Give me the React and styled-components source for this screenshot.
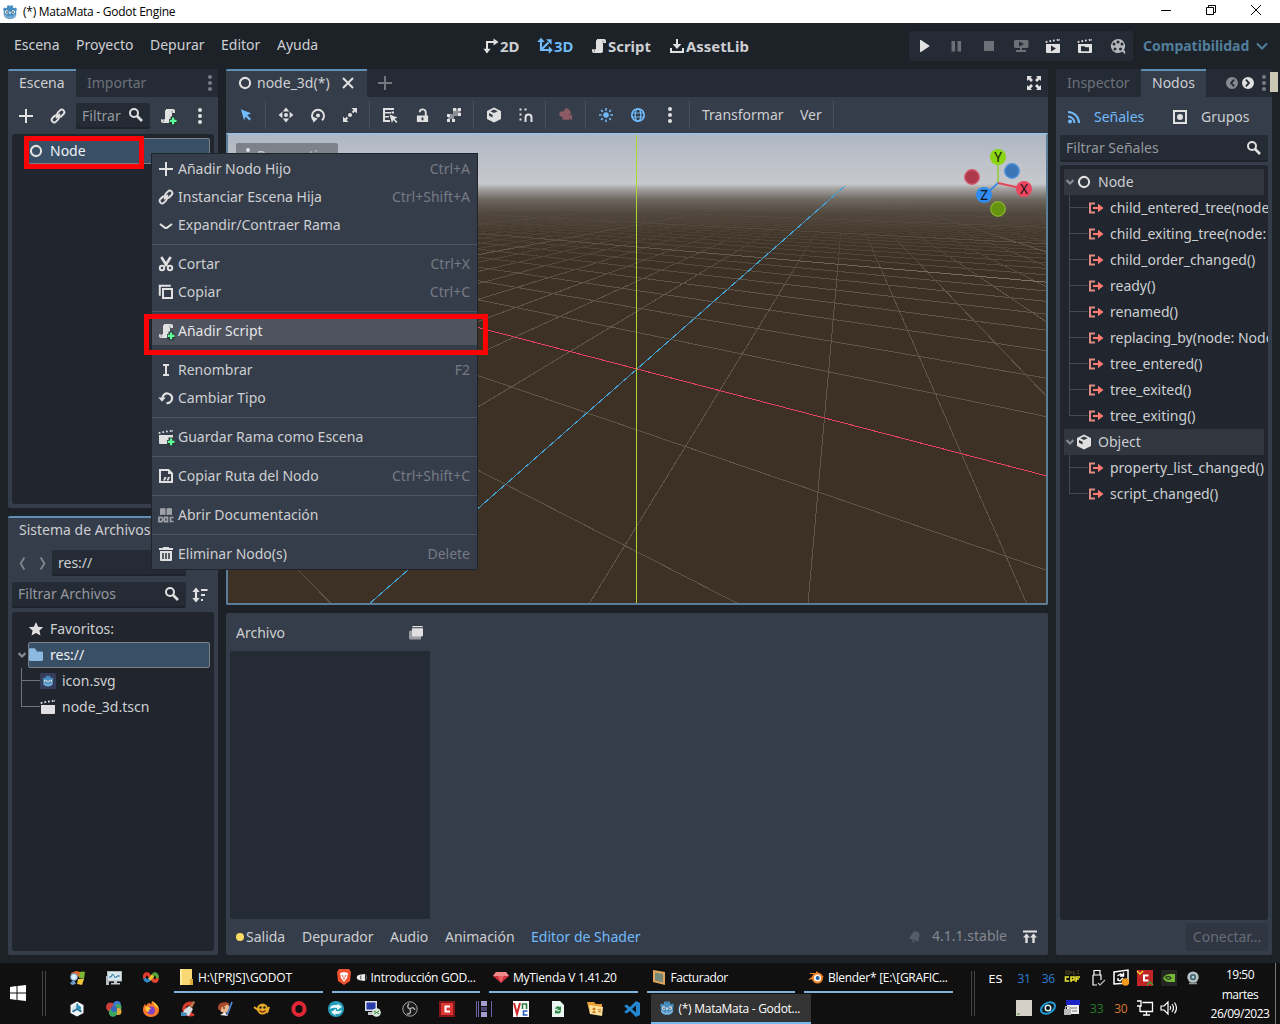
import React from 'react';
import styled, { createGlobalStyle, css } from 'styled-components';

const c = {
  base: '#1d2229', dark: '#252b34', panel: '#363d4a', tree: '#21262e', text: '#cdcfd2',
  dim: '#6c717b', mute: '#95989f', blue: '#70bafa', accent: '#5f8fb4', icon: '#e0e0e0',
};

const Global = createGlobalStyle`
  * { box-sizing: border-box; }
  html, body { margin: 0; background: ${c.base}; }
  body { width: 1280px; height: 1024px; overflow: hidden; font: 14px "Noto Sans", sans-serif; color: ${c.text}; }
  svg { display: block; flex: none; }
`;

/* raises the label by a pixel while the icons stay centred */
const lift = css`padding-bottom: 2px; & > svg { margin-top: 2px; }`;

/* ---------- icons ---------- */
const G = '#5fff97';
const scriptShape = (
  <>
    <path d="M6 1v1a1 1 0 0 0-1 1v8H1v2a2 2 0 0 0 2 2h7a2 2 0 0 0 2-2V5h3V3a2 2 0 0 0-2-2z" />
    <path d="M12 2.5V5M1.5 11.5h3M3.4 14V12" stroke="#8d9096" strokeWidth="1" fill="none" />
  </>
);
const slate = <path d="M.6 3.2l1.6-.4.5 1.8-1.9.4zM4.2 2.4l1.700-.4.4 1.8-1.7.4zM7.8 1.8l1.7-.3.4 1.8-1.7.3zM11.6 1.2l1.8-.3.4 1.8-1.8.3z M14.4.8H15v2h-.6z" />;
const plusBadge = <path d="M10.500 8.500h5V11H17v5h-1.500v1.500h-5V16H9v-5h1.500z" fill="#2b3a3a" />;
const plusMark = <path d="M12 9.500h2.200v2.300h2.300V14h-2.300v2.300H12V14H9.700v-2.200H12z" fill={G} />;
const line = { fill: 'none', stroke: 'currentColor', strokeWidth: 2 };

const icons = {
  add: <path d="M7 1v6H1v2h6v6h2V9h6V7H9V1z" />,
  link: <g {...line} strokeWidth="1.9"><rect x="-3.9" y="-2.5" width="7.8" height="5" rx="2.5" transform="translate(5.2 10.8) rotate(-45)" /><rect x="-3.9" y="-2.5" width="7.8" height="5" rx="2.5" transform="translate(10.8 5.2) rotate(-45)" /><path d="M6 10l4-4" /></g>,
  search: <g {...line}><circle cx="6" cy="6" r="4" /><path d="M9 9l5 5" strokeWidth="2.6" /></g>,
  script: scriptShape,
  scriptAdd: <>{scriptShape}{plusBadge}{plusMark}</>,
  dots: <><circle cx="8" cy="2" r="2" /><circle cx="8" cy="8" r="2" /><circle cx="8" cy="14" r="2" /></>,
  node: <circle cx="8" cy="8" r="5.1" {...line} strokeWidth="2.1" />,
  close: <path d="M3 3l10 10M13 3L3 13" {...line} />,
  twoD: <g><path d="M4 12V4h7" {...line} /><path d="M10.500 .4l5 3.600-5 3.600zM.4 10.800h7.200L4 15.600z" /></g>,
  threeD: <g><path d="M4 3v9h9M4 12l7.500-7.500" {...line} strokeWidth="2.2" /><path d="M4-.2L7.800 4H.2zM15.800 12l-4 3.800V8.200zM14.600 1.200v5.600L9 1.200z" /></g>,
  download: <g><path d="M2 10v4h12v-4" {...line} /><path d="M7 1h2v5h3.400L8 11 3.600 6H7z" /></g>,
  play: <path d="M4 2.500v11a.6.6 0 0 0 1 .4l8.200-5.400a.6.6 0 0 0 0-1L5 2.100a.6.6 0 0 0-1 .4z" />,
  pause: <path d="M3.500 3h3.600v10.500H3.500zM9.500 3h3.600v10.500H9.500z" />,
  stop: <path d="M3 3h10v10H3z" />,
  remote: <><path fillRule="evenodd" d="M3 2h11a1.500 1.500 0 0 1 1.500 1.500v5A1.500 1.500 0 0 1 14 10H2.500A1.500 1.500 0 0 1 1 8.500v-5A1.500 1.500 0 0 1 2.500 2zM6 3.400v5.200L11.200 6z" /><path d="M7 10h2v2h4v2H3v-2h4z" /></>,
  playScene: <>{slate}<path fillRule="evenodd" d="M1 6h14v8a1 1 0 0 1-1 1H2a1 1 0 0 1-1-1zM6 7.500v6l5-3z" /></>,
  playCustom: <>{slate}<path fillRule="evenodd" d="M1 6h14v8a1 1 0 0 1-1 1H2a1 1 0 0 1-1-1zM4 8.300v5h8V9.200H8.500L7.500 8.300z" /></>,
  scene: <>{slate}<path d="M1 6h14v8a1 1 0 0 1-1 1H2a1 1 0 0 1-1-1z" /></>,
  sceneAdd: <>{slate}<path d="M1 6h14v8a1 1 0 0 1-1 1H2a1 1 0 0 1-1-1z" />{plusBadge}{plusMark}</>,
  movie: <><path fillRule="evenodd" d="M8 1a7 7 0 1 0 3.500 13H15v-1.500h-1.600A7 7 0 0 0 8 1zm0 1.400a1.500 1.500 0 1 1 0 3 1.500 1.500 0 0 1 0-3zM4 4.500a1.500 1.500 0 1 1 0 3 1.500 1.500 0 0 1 0-3zm8 0a1.500 1.500 0 1 1 0 3 1.500 1.500 0 0 1 0-3zm-7 5a1.500 1.500 0 1 1 0 3 1.500 1.500 0 0 1 0-3zm5.500 0a1.500 1.500 0 1 1 0 3 1.500 1.500 0 0 1 0-3z" /><path d="M12.500 12l2.500 3.500" stroke="currentColor" strokeWidth="1.400" /></>,
  chevDown: <path d="M3 5.500L8 10.500l5-5" {...line} />,
  expandBranch: <path d="M2 7l4.800 3.600a2 2 0 0 0 2.400 0L14 7" {...line} />,
  chevLeft: <path d="M10 1.500L6 8l4 6.500" {...line} />,
  chevRight: <path d="M6 1.500L10 8l-4 6.500" {...line} />,
  fold: <path d="M3.400 5.500L8 10l4.600-4.500" {...line} strokeWidth="2.900" />,
  select: <path d="M2.200 1.500l11.500 4.400-4.300 2.300 4.400 4.200-1.900 1.900-4.300-4.300-1.900 4z" />,
  move: <><circle cx="8" cy="8" r="2" /><path d="M8 .6l3.200 3.800H4.800zM8 15.400l3.200-3.800H4.800zM.6 8l3.800 3.200V4.800zM15.400 8l-3.800 3.200V4.800z" /></>,
  rotate: <><circle cx="8" cy="8.500" r="2" /><path d="M4 13.300A6 6 0 1 1 12 13.300" {...line} /><path d="M1 9.300h6L4.500 14.800z" transform="rotate(20 4 12) translate(.3 1)" /></>,
  scale: <><circle cx="8" cy="8" r="2" /><path d="M9.500 1H15v5.500l-2-2-1.700 1.700-1.500-1.500L11.500 3zM6.500 15H1V9.500l2 2 1.700-1.700 1.500 1.500L4.500 13z" /></>,
  list: <><path d="M1 1h11v2H3v2h6v1.600H3V9h4v1.600H3V13h5v2H1z M9.500 4.500H12v2H9.500z" /><path d="M7.500 7.500l8 3-3 1.500 3 2.800-1.200 1.200-3-2.900-1.400 2.800z" /></>,
  unlock: <><path d="M5 4.500A3.200 3.200 0 0 1 11.500 5v4" {...line} /><path fillRule="evenodd" d="M2 8h12v7H2zM7 10v3h2v-3z" /></>,
  group: <><path d="M7 1h3v3H7zM12 1h3v3h-3zM12 6h3v3h-3zM1 7h3v3H1zM1 12h3v3H1zM6 12h3v3H6z" /><path d="M10 1.500h2V4h2.500v2H12v3H7V4h3zM2 10h2V7h4v5H4v2H2z" opacity=".5" /></>,
  cube: <path fillRule="evenodd" d="M8 .6l7 3.300v8.200l-7 3.400-7-3.400V3.900zM8 2.600L4.300 4.300 8 6.100l3.700-1.800zM3 6v2.700l3.600 1.700V7.800z" />,
  snap: <><path d="M1.500 1.500h2v2h-2zM6.500 1.500h2v2h-2zM1.500 6.500h2v2h-2zM1.500 11.500h2v2h-2z" /><path d="M7.500 15V10.500a3 3 0 0 1 6 0V15" {...line} /></>,
  camera: <path d="M6 2.500a3 3 0 0 1 5.700-.3A3.300 3.300 0 0 1 12 8v1l3-2v7l-3-2v1.500H4V10a3.200 3.200 0 1 1 1-6z" />,
  sun: <><circle cx="8" cy="8" r="3.200" /><path d="M8 0v3M8 13v3M0 8h3M13 8h3M2.400 2.400l1.900 1.900M11.700 11.700l1.900 1.900M13.600 2.400l-1.900 1.900M4.300 11.700l-1.900 1.900" {...line} strokeWidth="1.800" /></>,
  globe: <g {...line} strokeWidth="1.700"><circle cx="8" cy="8" r="6.200" /><ellipse cx="8" cy="8" rx="2.800" ry="6" strokeWidth="1.300" /><path d="M2 6h12M2 10h12" strokeWidth="1.200" /></g>,
  expand: <path d="M1 1h5L4.600 2.400 7 5 5 7 2.500 4.600 1 6zM15 1v5l-1.500-1.400L11 7 9 5l2.500-2.600L10 1zM1 15v-5l1.500 1.400L5 9l2 2-2.400 2.600L6 15zM15 15h-5l1.500-1.400L9 11l2-2 2.500 2.400L15 10z" />,
  prev: <path fillRule="evenodd" d="M8 2a6 6 0 1 0 0 12A6 6 0 0 0 8 2zm1.500 2l1.300 1.200L8.300 8l2.500 2.800L9.500 12 5.800 8z" />,
  next: <path fillRule="evenodd" d="M8 2a6 6 0 1 0 0 12A6 6 0 0 0 8 2zM6.500 4L5.200 5.200 7.700 8l-2.500 2.800L6.500 12l3.700-4z" />,
  signals: <><circle cx="4" cy="12.500" r="2" /><path d="M2 7.500a6.500 6.500 0 0 1 6.500 6.500M2 3a11 11 0 0 1 11 11" {...line} /></>,
  groups: <><path d="M2 2h12v12H2z" {...line} /><circle cx="8" cy="8" r="3" /></>,
  signal: <><path d="M7 3.500H2v9h5" {...line} /><path d="M5 7h5V3.700L15.500 8 10 12.300V9H5z" fill="#ff7a70" /></>,
  cut: <><path d="M3.300 1L9 10M12.700 1L7 10" {...line} strokeWidth="2.600" /><circle cx="4" cy="12" r="2.200" {...line} /><circle cx="12" cy="12" r="2.200" {...line} /></>,
  copy: <><path d="M1 11V1h11" {...line} transform="translate(.8 .8)" /><path d="M5 5h9v9H5z" {...line} /></>,
  rename: <path d="M5 2h6v2H9v8h2v2H5v-2h2V4H5z" />,
  reload: <><path d="M4.500 8a4.800 4.800 0 1 1 4 5" {...line} strokeWidth="2.200" /><path d="M.3 7.500h7.400L4 11.800z" /></>,
  path: <><path d="M2 2h8.500L14 5.500V14H2z" {...line} /><path d="M10 1l5 5h-5z" /><path d="M6.500 9h2L7 12.500H5zM10 9h2l-1.500 3.500h-2z" /></>,
  doc: <><path d="M2 1.500q3-1 5.500 0V8Q5 7.300 2 8zM8.500 1.500q3-1 5.500 0V8q-3-.7-5.500 0z" /><path d="M1 10.300h1.500a2 2 0 0 1 0 4.400H1zM6.500 10.300h3v4.400h-3zM15.500 10.500h-3v4h3" fill="none" stroke="currentColor" strokeWidth="1.700" /></>,
  trash: <path fillRule="evenodd" d="M5 1h6v1h4v2H1V2h4zM2 5h12v9a1 1 0 0 1-1 1H3a1 1 0 0 1-1-1zM4.200 7v6h1.600V7zM7.200 7v6h1.600V7zM10.200 7v6h1.600V7z" />,
  sort: <><path d="M4 3.500v9" {...line} strokeWidth="2.200" /><path d="M4 .5L7.700 5H.3zM4 15.500L7.700 11H.3zM9 2h6.500v2H9zM9 7h4v2H9zM9 12h2v2H9z" /></>,
  star: <path d="M8 1l2.100 4.700 5.100.5-3.800 3.400 1.100 5L8 12l-4.500 2.600 1.100-5L.8 6.200l5.100-.5z" />,
  folder: <path d="M1 2.500a1.200 1.200 0 0 1 1.200-1.200h4.600L8.500 3.500v1h5.300A1.200 1.200 0 0 1 15 5.700v7a1.200 1.200 0 0 1-1.200 1.200H2.200A1.200 1.200 0 0 1 1 12.700z" />,
  float: <><path d="M4 5.500h9v9H2.500A1.500 1.500 0 0 1 1 13V7a1.500 1.500 0 0 1 1.500-1.500z" opacity=".6" /><path d="M5.200 1h8.600A1.200 1.200 0 0 1 15 2.200H4A1.200 1.200 0 0 1 5.200 1zM4 3.200h11v7a1.200 1.200 0 0 1-1.200 1.200H5.200A1.200 1.200 0 0 1 4 10.200z" /></>,
  bell: <path transform="rotate(20 8 8)" d="M8 1.500a4.500 4.500 0 0 1 4.500 4.500c0 2.500.5 4 2 5.500h-13c1.500-1.500 2-3 2-5.500A4.500 4.500 0 0 1 8 1.500zM6 12.500h4a2 2 0 0 1-4 0z" />,
  toTop: <path d="M1 1.500h14v2H1zM4.500 4.500L8 8.500H5.700V14H3.300V8.500H1zM11.500 4.500L15 8.500h-2.300V14h-2.400V8.500H8z" />,
};

const Glyph = ({ n, s = 16, color = c.icon }) => (
  <svg width={s} height={s} viewBox="0 0 16 16" fill="currentColor" color={color} overflow="visible">{icons[n]}</svg>
);

const Godot = ({ s = 16, tile }) => (
  <svg width={s} height={s} viewBox="0 0 16 16">
    {tile && <rect width="16" height="16" rx="1.500" fill="#363d5a" />}
    <g transform={tile ? 'translate(1.800 1.800) scale(.78)' : undefined}>
      <path d="M1 5l1.500-1.500L4 4.300l1-.5L4.800 2 7 1l1 1.700L9 1l2.200 1L11 3.800l1 .5 1.500-.8L15 5l-.8 2v4.500Q12.500 15 8 15T1.800 11.500V7z" fill="#478cbf" />
      <path d="M2 10.500l3 .4.300 1.300 1.700.2.200-1.200h1.600l.2 1.200 1.700-.2.300-1.300 3-.4v1.200Q12 14.500 8 14.500T2 11.700z" fill="#9cc6e4" opacity=".6" />
      <circle cx="4.700" cy="8" r="1.700" fill="#fff" /><circle cx="11.300" cy="8" r="1.700" fill="#fff" />
      <circle cx="4.900" cy="8.100" r=".9" fill="#414042" /><circle cx="11.100" cy="8.100" r=".9" fill="#414042" />
      <path d="M7.400 7.500h1.200v2.400H7.400z" fill="#fff" />
    </g>
  </svg>
);

/* ---------- window chrome ---------- */
const Shell = styled.div`width: 1280px; height: 1024px; position: relative; display: flex; flex-direction: column; overflow: hidden; background: ${c.base};`;
const TitleBar = styled.header`height: 23px; background: #fff; color: #000; display: flex; align-items: center; padding-left: 2px; font: 12px "Open Sans", sans-serif;`;
const Title = styled.span`flex: 1; margin-left: 5px; letter-spacing: -.26px; line-height: 24px; height: 23px;`;
const WinButtons = styled.div`display: flex; gap: 29px; padding-right: 16px; margin-top: -3px;`;
const MenuBar = styled.nav`height: 46px; display: flex; align-items: center; padding-left: 14px;`;
const MenuItem = styled.span`width: ${p => p.$w}px; white-space: nowrap; margin-top: -4px; flex: none;`;
const ModeButton = styled.span`width: ${p => p.$w}px; flex: none; display: flex; align-items: center; gap: 1px; font-weight: 700; font-size: 14.900px; white-space: nowrap; color: ${p => (p.$on ? c.blue : c.text)};`;
const RunBar = styled.div`width: 224px; height: 30px; flex: none; background: ${c.dark}; border-radius: 3px; display: flex; align-items: center; padding-left: 7px; gap: 16.300px; margin-left: ${p => p.$ml}px;`;
const Renderer = styled.span`margin-left: 10px; display: flex; align-items: center; gap: 5px; color: #527e9b; font-weight: 700; ${lift}`;

const Work = styled.main`height: 886px; display: flex; gap: 8px; padding: 0 8px;`;
const Column = styled.div`width: ${p => p.$w}px; display: flex; flex-direction: column; gap: 8px; flex: none;`;
const Dock = styled.section`height: ${p => p.$h}px; background: ${c.panel}; border-radius: 2px; display: flex; flex-direction: column; overflow: hidden; flex: none;`;
const Tabs = styled.div`height: 28px; background: ${p => p.$bg || c.dark}; display: flex; align-items: center; padding-right: ${p => p.$pr || 0}px; flex: none;`;
const Tab = styled.div`width: ${p => p.$w}px; height: 28px; display: flex; align-items: center; padding: 0 0 4px ${p => p.$pl || 11}px; gap: 4px; white-space: nowrap;
  color: ${p => (p.$on ? c.text : c.dim)}; background: ${p => (p.$on ? c.panel : 'transparent')}; border-top: 2px solid ${p => (p.$on ? c.accent : 'transparent')}; & > svg { margin-top: 2px; }`;
const Push = styled.span`flex: 1;`;
const Tools = styled.div`height: ${p => p.$h}px; display: flex; align-items: center; flex: none; padding: ${p => p.$pt || 0}px 4px 0;`;
const Tool = styled.span`width: ${p => p.$w || 32}px; display: flex; align-items: center; justify-content: center; flex: none;`;
const Divider = styled.span`width: 8px; height: 28px; background: linear-gradient(#4a505c, #4a505c) 3px 0 / 1px 100% no-repeat; flex: none;`;
const TextTool = styled.span`width: ${p => p.$w}px; padding: 0 0 2px 8px; flex: none;`;
const Field = styled.div`width: ${p => p.$w}px; height: ${p => p.$h || 26}px; background: ${c.dark}; border-bottom: 2px solid #1e232b; border-radius: 2px; display: flex; align-items: center; justify-content: space-between;
  padding: 0 6px; color: ${p => (p.$lit ? c.text : c.mute)}; flex: none; white-space: nowrap;`;
const Tree = styled.div`margin: ${p => p.$m || '0 4px 4px'}; padding: 4px; background: ${c.tree}; border-radius: 3px; flex: 1; min-height: 0; overflow: hidden;`;
const Selected = styled.div`height: 26px; width: 182px; margin-left: ${p => p.$ml}px; flex: none; display: flex; align-items: center; gap: 6px; background: #384f66; border: 1px solid #7b8088; border-radius: 2px; color: #eef1f4; ${lift} & > svg { margin-left: -1px; }`;
const Branch = styled.div`height: 26px; width: 19px; flex: none; margin: 2px -6px 0 5px; display: grid; grid-template-rows: 13px 13px;
  &::before { content: ''; border-left: 1px solid ${p => p.$c}; border-bottom: 1px solid ${p => p.$c}; }
  &::after { content: ''; border-left: ${p => (p.$last ? 0 : 1)}px solid ${p => p.$c}; }`;
const Row = styled.div`height: 26px; display: flex; align-items: center; gap: ${p => p.$gap ?? 6}px; padding-left: ${p => p.$pl || 0}px; white-space: nowrap; ${lift}
  & > ${Selected} { margin-top: 2px; }
  ${p => p.$head && 'background: #31363f; width: 200px;'}`;

/* ---------- 3D view ---------- */
const View = styled.div`height: 472px; position: relative; overflow: hidden; border: 2px solid #5b7d97; border-top-color: #9cbfe0; border-radius: 1px;`;
const Chip = styled.div`position: absolute; left: 8px; top: 8px; width: 102px; height: 26px; background: rgba(70,74,80,.5); border-radius: 2px; color: #c7cacf; display: flex; align-items: center; gap: 1px; padding-left: 4px; ${lift}`;

const project = (x, z) => {
  const w = 1 - 0.104 * x - 0.1935 * z;
  return [(637 + 8 * x - 163.500 * z) / w, (369 - 19.300 * x - 36 * z) / w];
};
const segment = (a, b) => `M${a.map(v => v.toFixed(1)).join(' ')}L${b.map(v => v.toFixed(1)).join(' ')}`;
const alongZ = x => segment(project(x, -60), project(x, (0.92 - 0.104 * x) / 0.1935));
const alongX = z => segment(project(-120, z), project((0.92 - 0.1935 * z) / 0.104, z));
const steps = (a, b) => Array.from({ length: b - a + 1 }, (_, i) => a + i);
const minor = [...steps(-44, 34).filter(n => n % 8).map(alongZ), ...steps(-44, 4).filter(n => n % 8).map(alongX)].join('');
const major = [...[-40, -32, -24, -16, -8, 8, 16, 24, 32].map(alongZ), ...[-40, -32, -24, -16, -8].map(alongX)].join('');

const Scene = () => (
  <svg width="818" height="468" viewBox="228 135 818 468">
    <defs>
      <linearGradient id="sky" gradientUnits="userSpaceOnUse" x1="0" y1="133" x2="0" y2="605">
        <stop offset="0" stopColor="#aeb6c2" /><stop offset=".055" stopColor="#bcc1c9" /><stop offset=".108" stopColor="#c6c8cb" />
        <stop offset=".118" stopColor="#a5a3a1" /><stop offset=".14" stopColor="#706962" /><stop offset=".17" stopColor="#50473c" />
        <stop offset=".21" stopColor="#42372b" /><stop offset=".27" stopColor="#3d3126" /><stop offset="1" stopColor="#3d3126" />
      </linearGradient>
      <linearGradient id="fade" gradientUnits="userSpaceOnUse" x1="0" y1="204" x2="0" y2="285">
        <stop offset="0" stopColor="#fff" stopOpacity="0" /><stop offset=".4" stopColor="#fff" stopOpacity=".35" /><stop offset="1" stopColor="#fff" />
      </linearGradient>
      <mask id="far" maskUnits="userSpaceOnUse" x="226" y="133" width="822" height="472"><rect x="226" y="133" width="822" height="472" fill="url(#fade)" /></mask>
    </defs>
    <rect x="226" y="133" width="822" height="472" fill="url(#sky)" />
    <g fill="none" shapeRendering="crispEdges">
      <g mask="url(#far)"><path d={minor} stroke="#5e554b" /><path d={major} stroke="#7f786f" /></g>
      <path d="M478 327.500L637 369 1048 476.300" stroke="#e8435f" />
      <path d="M845.500 185.500L637 369 368 605" stroke="#459fd0" />
      <path d="M636.500 133v472" stroke="#a9d92e" />
    </g>
    <g strokeWidth="1.800">
      <path d="M998 183V160" stroke="#9ccb58" strokeWidth="2" /><path d="M998 183l22 5" stroke="#e5465c" /><path d="M998 183l-12 11" stroke="#3a8de0" />
      <circle cx="972" cy="177" r="7.200" fill="#ad374b" stroke="#d3566c" strokeWidth="1.500" />
      <circle cx="1012" cy="171" r="7.200" fill="#3b75b5" stroke="#4d90d8" strokeWidth="1.500" />
      <circle cx="998" cy="209" r="7.200" fill="#66930f" stroke="#82ae28" strokeWidth="1.500" />
    </g>
    <circle cx="998" cy="157" r="8" fill="#8bd514" /><circle cx="1024" cy="189" r="8" fill="#ec4560" /><circle cx="984" cy="195" r="8" fill="#2f8cf0" />
    <g fontFamily="Noto Sans" fontSize="13.500" textAnchor="middle" fill="#111"><text x="998" y="162">Y</text><text x="1024" y="194">X</text><text x="984" y="200">Z</text></g>
  </svg>
);

/* ---------- bottom panel ---------- */
const FileHead = styled.div`height: 38px; width: 200px; margin-left: 4px; padding: 2px 6px 0; display: flex; align-items: center; justify-content: space-between; ${lift}`;
const FileList = styled.div`height: 268px; width: 200px; margin-left: 4px; background: ${c.dark}; border-radius: 2px;`;
const BottomBar = styled.div`height: 36px; display: flex; align-items: center; padding: 0 10px; ${lift}`;
const BottomTab = styled.span`width: ${p => p.$w}px; white-space: nowrap; color: ${p => (p.$on ? c.blue : c.text)};`;
const Dot = styled.i`width: 8px; height: 8px; border-radius: 50%; background: #ffdd65; margin: 2px 2px 0 0;`;
const Version = styled.span`color: #83878f; margin: -2px 15px 0 10px;`;

const SignalTabs = styled.div`height: 38px; display: flex; align-items: center; padding-left: 10px; padding-top: 2px; flex: none;`;
const SignalTab = styled.span`width: ${p => p.$w}px; display: flex; align-items: center; gap: ${p => p.$gap}px; color: ${p => (p.$on ? c.blue : c.text)}; ${lift}`;
const Connect = styled.div`width: 82px; height: 28px; margin: 0 4px 4px auto; background: #2f3541; border-radius: 2px; color: #676c76; display: flex; align-items: center; justify-content: center; ${lift}`;

/* ---------- context menu ---------- */
const Menu = styled.div`position: absolute; left: 151px; top: 153px; width: 327px; height: 417px; padding: 1px 0; background: ${c.panel}; border: 1px solid #1f242c; z-index: 2;`;
const Entry = styled.div`height: 28px; padding: 0 7px 0 6px; display: flex; align-items: center; gap: 4px; background: ${p => (p.$hot ? '#4e535e' : 'transparent')}; color: ${p => (p.$hot ? '#e3e5e8' : c.text)}; ${lift}`;
const Keys = styled.span`margin-left: auto; color: #757a84;`;
const Rule = styled.div`height: 11px; background: linear-gradient(#4d5460, #4d5460) 0 5px / 100% 1px no-repeat;`;
const Highlight = styled.div`position: absolute; z-index: 3; border: 5px solid #fb0204; left: ${p => p.$x}px; top: ${p => p.$y}px; width: ${p => p.$w}px; height: ${p => p.$h}px;`;
const Sliver = styled.div`position: absolute; left: 1270px; top: 72px; width: 8px; height: 20px; background: #cbc7b2;`;

const entries = [
  ['add', 'Añadir Nodo Hijo', 'Ctrl+A'], ['link', 'Instanciar Escena Hija', 'Ctrl+Shift+A'], ['expandBranch', 'Expandir/Contraer Rama'], null,
  ['cut', 'Cortar', 'Ctrl+X'], ['copy', 'Copiar', 'Ctrl+C'], null, ['scriptAdd', 'Añadir Script', '', true], null,
  ['rename', 'Renombrar', 'F2'], ['reload', 'Cambiar Tipo'], null, ['sceneAdd', 'Guardar Rama como Escena'], null,
  ['path', 'Copiar Ruta del Nodo', 'Ctrl+Shift+C'], null, ['doc', 'Abrir Documentación'], null, ['trash', 'Eliminar Nodo(s)', 'Delete'],
];

/* ---------- taskbar ---------- */
const Taskbar = styled.footer`height: 61px; margin-top: 8px; background: #101010; display: flex; color: #fff; font: 12px "Open Sans", sans-serif; padding-left: 10px; flex: none; & > * { flex: none; }`;
const Grip = styled.span`width: 4px; height: 45px; margin-top: 8px; border: solid #444; border-width: 0 1px;`;
const Start = styled.span`width: 32px; padding-top: 22px;`;
const TaskRows = styled.div`width: 912px; margin-left: 12.500px;`;
const TaskRow = styled.div`height: ${p => p.$h}px; display: flex; & > * { flex: none; }`;
const Slot = styled.span`width: 37px; height: 30px; display: grid; place-items: center;`;
const Task = styled.span`width: 148.500px; height: 30px; margin-right: 9px; padding-left: 4px; border-bottom: 2px solid #7fb2dd; display: flex; align-items: center; gap: 4px; white-space: nowrap; letter-spacing: ${p => p.$ls ?? -.27}px;`;
const ActiveTask = styled(Task)`width: 160px; padding-left: 8px; margin: 0; background: #333; border-bottom-color: #76b9ed;`;
const First = styled.span`width: 4.500px;`;
const Lang = styled.span`width: 37.500px; padding: 10px 0 0 14px; font-family: "DejaVu Sans", sans-serif; font-size: 11px;`;
const Tray = styled.div`width: 194px; display: grid; grid-template-columns: repeat(8, 24.200px); grid-template-rows: 30px 30px; place-items: center;`;
const Temp = styled.span`color: ${p => p.$c}; letter-spacing: -.3px;`;
const Clock = styled.div`width: 68px; text-align: center; line-height: 19.500px; padding-top: 2px; white-space: nowrap; letter-spacing: -.48px;`;
const ShowDesk = styled.span`height: 61px; width: 4px; border-left: 1px solid #777; margin-left: 1px;`;

const apps = {
  win7: <><path d="M7 1l4 1v5L7 6zM2 3l5-2v5L3 8z" fill="#e66a28" /><path d="M11 2q3-1 5 0l-1 7-5-1z" fill="#7eb636" /><path d="M9 9h6l-2 6-5-1z" fill="#f0c63c" /><path d="M1 13l4-3 2 4-4 1z" fill="#6f9fc9" /><circle cx="5" cy="7" r="3.500" fill="#dbeefa" stroke="#5b89b5" /></>,
  monitor: <><path d="M0 6h3v9H0z" fill="#b9bfc4" /><rect x="1.500" y="1.500" width="14" height="9.500" fill="#d8e6ec" stroke="#aeb5b9" /><path d="M3 7h2l1.500-3 3 4 1.500-2h3" stroke="#18739b" fill="none" /><path d="M8 11h3v2h3v1.500H5V13h3z" fill="#c9cccd" /></>,
  loop: <g fill="none" strokeWidth="3.200"><path d="M8 8L5.500 10.500Q3 12 1.500 8" stroke="#3087c7" /><path d="M1.500 8Q1 3 5 4l3 4" stroke="#e23b2e" /><path d="M8 8l3 3q3 1 3.500-3" stroke="#e9452f" /><path d="M8 8l3-4q3-1 3.500 4" stroke="#58a63b" /><path d="M6.500 9.500L10 5.500" stroke="#f3c12c" /></g>,
  folder: <><path d="M2 0h12v16H2z" fill="#f7d872" /><path d="M12 10h3v6h-3z" fill="#dcae3c" /><path d="M2 0h2v16H2z" fill="#ffe9a0" /></>,
  brave: <><path d="M3 0h10l2 3-1 9-6 4-6-4L1 3z" fill="#f0532d" /><path d="M4 4l4-1 4 1-1 5-3 4-3-4z" fill="#fff" /><path d="M6 6L7 8M10 6L9 8M8 8v3" stroke="#f0532d" /></>,
  gem: <><path d="M3 3h10l3 4-8 7-8-7z" fill="#c9333c" /><path d="M3 3h10l3 4H0z" fill="#f0898a" /><path d="M5 7h6l-3 7z" fill="#ea5e64" /></>,
  pane: <><path d="M2 1l12 2v13L2 13z" fill="#e0a45c" /><path d="M4 3.500l8 1.500v8.500l-8-2z" fill="#758a7b" /></>,
  blender: <><path d="M0 11l7-6H2V4h6V2l8 6z" fill="#f08223" /><circle cx="9.500" cy="9" r="5.500" fill="#f08223" /><circle cx="9.500" cy="9" r="3.600" fill="#fff" /><circle cx="9.700" cy="9" r="2" fill="#245b9d" /></>,
  hex: <><path d="M8 .5L14.500 4v8L8 15.500 1.500 12V4z" fill="#f2f5f7" /><path d="M8 2.500V8l-5 2.500V7z" fill="#d1e3ec" /><path d="M7.500 2.500h1.500v5l4 2.500-1 1.500-4-2.500L4 11.500 3 10l4.500-2.500z" fill="#256f94" /><path d="M8 3l4 3v3L8 7.500z" fill="#2b93b9" /></>,
  balls: <><circle cx="4.500" cy="6" r="4.500" fill="#cb3f3d" /><circle cx="11" cy="4" r="3.900" fill="#3d78d3" /><circle cx="12" cy="6.500" r="3.500" fill="#4aa35a" /><circle cx="12" cy="10.500" r="3.500" fill="#e0a93b" /><circle cx="7" cy="11.500" r="4.200" fill="#39a85d" /><circle cx="8" cy="8" r="3" fill="#3566c4" /></>,
  firefox: <><path d="M9 0c3 2 7 4 7 9a8 7 0 0 1-16 0C0 6 1 4 2 3l1 2c1-2 2-3 4-3l1 2z" fill="#ff7a2a" /><circle cx="8" cy="9.500" r="4" fill="#8243c9" /><path d="M2 6q4-1 6 2-3 0-2 3-3 0-4-5zM9 0c3 2 6 4 6.500 8L12 5z" fill="#ffcf3c" /></>,
  cc: <><path d="M15 2A8 7.500 0 1 0 15 14l-4-3q-5 2-5-3t5-3z" fill="#d43c2e" /><path d="M9 6l4-6 2 1-3 6z" fill="#b9774a" /><path d="M4 9l5-4 4 3-4 7-6-2z" fill="#d7dfe2" /><path d="M1 11l6 1-1 3H1z" fill="#408dbb" /></>,
  painter: <><circle cx="7.500" cy="7" r="5" fill="#eab588" /><path d="M1 8q-1-7 8-7l4 2q-5 1-6 3-3-1-3 4z" fill="#a9492c" /><path d="M3 14l5-3 3 4z" fill="#e8e8e8" /><circle cx="7" cy="7" r=".8" /><path d="M15 1L10 14" stroke="#4d85ce" strokeWidth="1.800" /></>,
  smile: <><circle cx="8.500" cy="8" r="5.500" fill="#e7ac27" /><circle cx="6.500" cy="6.500" r="1.200" fill="#222" /><circle cx="10.500" cy="6.500" r="1.200" fill="#222" /><path d="M5.500 9.500q3 3 6 0" stroke="#7b2a16" strokeWidth="1.300" fill="none" /><path d="M0 6l4 3M13 12l2-6" stroke="#e7ac27" strokeWidth="2" /></>,
  opera: <ellipse cx="8" cy="8" rx="5.600" ry="6" fill="none" stroke="#e12635" strokeWidth="4" />,
  swirl: <><circle cx="8" cy="8" r="8" fill="#269db7" /><path d="M2 8q0-4 5-4h3l-1-2 5 4-5 3V7q-4-1-7 1zM14 9q-1 4-5 4H7l1 2-5-4 5-3v2q3 1 6-1z" fill="#e8f7fa" /></>,
  remote: <><path d="M0 0h12v10H0z" fill="#d8dde8" /><path d="M1.500 1.500h9v7h-9z" fill="#283ba8" /><path d="M3 11h6v3H3z" fill="#bfc4c9" /><circle cx="11.500" cy="11.500" r="4.300" fill="#dfe7dc" /><path d="M9 10l2.500 1.500L9 13M14 10l-2.500 1.500L14 13" stroke="#268342" fill="none" /></>,
  obs: <><circle cx="8" cy="8" r="7.200" fill="#1b1b1b" stroke="#a6a6a6" /><path d="M7 2.500q-3 4 1 5.500M13 9q-2-4-5-1M5 13q5 0 3-5" fill="none" stroke="#a6a6a6" strokeWidth="1.500" /></>,
  red: <><rect width="16" height="16" fill="#841719" /><rect x="2" y="2" width="12" height="12" fill="#dc3735" /><path d="M11 5.500H6.500v5H11" fill="none" stroke="#fff" strokeWidth="2" /></>,
  redTray: <><rect width="16" height="16" fill="#c02427" /><path d="M11.500 5.500H7v5h4.500" fill="none" stroke="#fff" strokeWidth="2" /><path d="M0 1l3 3 3-3" fill="none" stroke="#e8d638" strokeWidth="1.500" /><path d="M10 15l3-3 3 3" fill="none" stroke="#36a23b" strokeWidth="1.500" /></>,
  h: <><path d="M.5 0v16M15.500 0v16M2.500 0v16" stroke="#6d62a8" /><path d="M5 0h6v5H5zM5 11h6v5H5z" fill="#a39dd0" /><path d="M5 6h6v4H5z" fill="#4b4670" /></>,
  vnc: <><rect width="16" height="16" fill="#fff" /><path d="M1 2l3 11L7 2" stroke="#cd2626" strokeWidth="2" fill="none" /><path d="M9.500 8V3h4v5" stroke="#287d3b" strokeWidth="1.600" fill="none" /><path d="M14.500 10h-4v4h4" stroke="#2759bc" strokeWidth="1.600" fill="none" /></>,
  recycle: <><path d="M2 0h8l4 4v12H2z" fill="#eaf5ef" /><path d="M5 8q1-4 5-2l1-1v4H7l1.500-1.500M11 9q0 5-5 3l-1 1V9.500h3L7 11" fill="#298642" /></>,
  contact: <><path d="M0 1h7l2 2h6v10H3z" fill="#e79e31" /><path d="M2 4l14 2-1 9-12-2z" fill="#ffe09a" /><circle cx="7" cy="8" r="1.500" fill="#c87622" /><path d="M5 12q2-4 4 0z" fill="#c87622" /><path d="M11 8.500l3 .4M11 10.500l3 .4" stroke="#c87622" /></>,
  code: <path fillRule="evenodd" d="M12 0l4 2v12l-4 2-6-6-3.500 2.500L0 11l3.500-3L0 5l2.500-1.500L6 6zM12 4.500L8 8l4 3.500z" fill="#2587cf" />,
  key: <><path d="M2 1h3v3H2zM7 1v3M9.500 1v3h2M13 1h2M13 3.500h2" stroke="#4e4720" strokeWidth="1.200" fill="none" /><path d="M5 7H1.500v4H5M7 12V7h3v3H7M16 7h-4v5M12 9h3" stroke="#e9e531" strokeWidth="1.600" fill="none" /></>,
  usb: <g fill="none" stroke="#fff" strokeWidth="1.200"><path d="M5 .500h6V5H5zM4 5h8v5M4 5v10h4" /><path d="M9 13l2 2 5-5" stroke="#bbb" /></g>,
  sync: <><path d="M1 2l14-2v13L1 14z" fill="none" stroke="#fff" strokeWidth="1.500" /><path d="M4.500 6l3-2 3 1.500M5 10l2 1 3-3M10.500 2.500v3.500H7M5 8v3" stroke="#fff" strokeWidth="1.400" fill="none" /><circle cx="12.500" cy="12" r="3.700" fill="#f5991e" /></>,
  nvidia: <><rect width="16" height="16" fill="#242622" /><path d="M2 8q3-4.500 6-3.500V4h6v8H8Q4 12 2 8z" fill="#76b737" /><path d="M4 8q3-3 6 0-3 3-4.500 0" fill="none" stroke="#24351a" strokeWidth="1.200" /></>,
  cam: <><circle cx="8" cy="7" r="6.500" fill="#b8c0c4" /><circle cx="8" cy="7" r="3.500" fill="#48646f" /><circle cx="8" cy="7" r="1.500" fill="#a3cfda" /><path d="M4 13h8l1 2H3z" fill="#909799" /></>,
  square: <><path d="M0 0h16v16H0z" fill="#d4d0c8" /><path d="M1 14h3" stroke="#4d9a38" /></>,
  orbit: <g fill="none" strokeWidth="2.200"><ellipse cx="8" cy="8" rx="7.500" ry="5" transform="rotate(-30 8 8)" stroke="#1f97cf" /><circle cx="8" cy="8" r="2.800" stroke="#d6f1fb" strokeWidth="1.500" /></g>,
  lockWin: <><path d="M3 1h12v13H3z" fill="#f0f0f0" /><path d="M2 0h14v5H2z" fill="#1a24c4" /><path d="M6 8h7M8 11h5" stroke="#777" /><path d="M0 9h7v6H0z" fill="#bbb" /><path d="M1.500 9V6.500h4V9" stroke="#bbb" fill="none" /></>,
  net: <g fill="none" stroke="#fff" strokeWidth="1.300"><path d="M5.500 2.500h10v9H3M9.500 12v3M6 15h7M0 1h4v5H0M3 6v6" /></g>,
  sound: <g fill="none" stroke="#fff" strokeWidth="1.200"><path d="M0 6h3l4-4v12L3 10H0zM9 6q1.500 2 0 4M11 4q3 4 0 8M13.500 2.500q4 5.500 0 11" /></g>,
  speaker: <><path d="M1 8q0-3 4-4l8-1v10l-8-1Q1 11 1 8z" fill="#eee" /><path d="M7 5v6M14 4q3 4 0 8" stroke="#555" strokeWidth="1.500" fill="none" /></>,
};
const AppIcon = ({ n, s = 16 }) => <svg width={s} height={s} viewBox="0 0 16 16" overflow="visible">{apps[n]}</svg>;

const signals = ['child_entered_tree(node: Node)', 'child_exiting_tree(node: Node)', 'child_order_changed()', 'ready()', 'renamed()', 'replacing_by(node: Node)', 'tree_entered()', 'tree_exited()', 'tree_exiting()'];
const SignalList = ({ items }) => items.map((t, i) => (
  <Row key={t}><Branch $c="#454a53" $last={i === items.length - 1} /><Glyph n="signal" color="#e08a84" /><span>{t}</span></Row>
));

export default function App() {
  return (
    <Shell>
      <Global />
      <TitleBar>
        <Godot /><Title>(*) MataMata - Godot Engine</Title>
        <WinButtons>
          {['M3 8.500h10', 'M3.500 5.500h7v7h-7zM5.500 5.500v-2h7v7h-2', 'M3 3l10 10M13 3L3 13'].map(d => <svg key={d} width="16" height="16" viewBox="0 0 16 16"><path d={d} fill="none" stroke="#000" /></svg>)}
        </WinButtons>
      </TitleBar>
      <MenuBar>
        <MenuItem $w={62}>Escena</MenuItem><MenuItem $w={74}>Proyecto</MenuItem><MenuItem $w={71}>Depurar</MenuItem><MenuItem $w={56}>Editor</MenuItem><MenuItem $w={206}>Ayuda</MenuItem>
        <ModeButton $w={54}><Glyph n="twoD" />2D</ModeButton><ModeButton $w={54} $on><Glyph n="threeD" color={c.blue} />3D</ModeButton>
        <ModeButton $w={78}><Glyph n="script" />Script</ModeButton><ModeButton $w={82}><Glyph n="download" />AssetLib</ModeButton>
        <RunBar $ml={158}>
          <Glyph n="play" /><Glyph n="pause" color="#6c7077" /><Glyph n="stop" color="#6c7077" /><Glyph n="remote" color="#6c7077" /><Glyph n="playScene" /><Glyph n="playCustom" /><Glyph n="movie" color="#b4b6b9" />
        </RunBar>
        <Renderer>Compatibilidad<Glyph n="chevDown" color="#527e9b" /></Renderer>
      </MenuBar>

      <Work>
        <Column $w={210}>
          <Dock $h={439}>
            <Tabs><Tab $on $w={68}>Escena</Tab><Tab $w={126}>Importar</Tab><Glyph n="dots" color="#787c84" /></Tabs>
            <Tools $h={37} $pt={1}>
              <Tool $w={28}><Glyph n="add" /></Tool><Tool $w={36}><Glyph n="link" /></Tool>
              <Field $w={74}>Filtrar<Glyph n="search" /></Field>
              <Tool $w={36}><Glyph n="scriptAdd" /></Tool><Tool $w={28}><Glyph n="dots" /></Tool>
            </Tools>
            <Tree><Selected $ml={12}><Glyph n="node" /><span>Node</span></Selected></Tree>
          </Dock>
          <Dock $h={439}>
            <Tabs $bg={c.panel}><Tab $on $w={210}>Sistema de Archivos</Tab></Tabs>
            <Tools $h={37} $pt={1}><Tool $w={20}><Glyph n="chevLeft" color="#80858d" s={15} /></Tool><Tool $w={20}><Glyph n="chevRight" color="#80858d" s={15} /></Tool><Field $w={134} $lit>res://</Field><Tool $w={28}><Glyph n="groups" /></Tool></Tools>
            <Tools $h={27}><Field $w={174}>Filtrar Archivos<Glyph n="search" /></Field><Tool $w={28}><Glyph n="sort" /></Tool></Tools>
            <Tree $m="4px">
              <Row $pl={12}><Glyph n="star" />Favoritos:</Row>
              <Row $gap={0}><Glyph n="fold" s={12} color="#878b92" /><Selected $ml={0}><Glyph n="folder" color="#8cb9e2" />res://</Selected></Row>
              <Row><Branch $c="#70747a" /><Godot tile s={16} /><span>icon.svg</span></Row>
              <Row><Branch $c="#70747a" $last /><Glyph n="scene" /><span>node_3d.tscn</span></Row>
            </Tree>
          </Dock>
        </Column>

        <Column $w={822}>
          <Dock $h={536}>
            <Tabs $pr={6}><Tab $on $w={141}><Glyph n="node" />node_3d(*)<Push /><Glyph n="close" /><Tool $w={7} /></Tab><Tool $w={36}><Glyph n="add" color="#737780" /></Tool><Push /><Glyph n="expand" /></Tabs>
            <Tools $h={36}>
              <Tool><Glyph n="select" s={14} color={c.blue} /></Tool><Divider />
              <Tool><Glyph n="move" /></Tool><Tool><Glyph n="rotate" /></Tool><Tool><Glyph n="scale" /></Tool><Divider />
              <Tool><Glyph n="list" /></Tool><Tool><Glyph n="unlock" s={15} /></Tool><Tool><Glyph n="group" /></Tool><Divider />
              <Tool><Glyph n="cube" /></Tool><Tool><Glyph n="snap" /></Tool><Divider />
              <Tool><Glyph n="camera" s={14} color="#8a5b63" /></Tool><Divider />
              <Tool><Glyph n="sun" s={14} color={c.blue} /></Tool><Tool><Glyph n="globe" color={c.blue} /></Tool><Tool><Glyph n="dots" /></Tool><Divider />
              <TextTool $w={98}>Transformar</TextTool><TextTool $w={38}>Ver</TextTool><Divider />
            </Tools>
            <View><Scene /><Chip><Glyph n="dots" />Perspectiva</Chip></View>
          </Dock>
          <Dock $h={342}>
            <FileHead>Archivo<Glyph n="float" /></FileHead>
            <FileList />
            <BottomBar>
              <Dot /><BottomTab $w={56}>Salida</BottomTab><BottomTab $w={88}>Depurador</BottomTab><BottomTab $w={55}>Audio</BottomTab><BottomTab $w={86}>Animación</BottomTab><BottomTab $on>Editor de Shader</BottomTab>
              <Push /><Glyph n="bell" color="#565d69" s={14} /><Version>4.1.1.stable</Version><Glyph n="toTop" />
            </BottomBar>
          </Dock>
        </Column>

        <Column $w={216}>
          <Dock $h={886}>
            <Tabs><Tab $w={85}>Inspector</Tab><Tab $on $w={65}>Nodos</Tab><Push /><Glyph n="prev" color="#86898f" /><Glyph n="next" /><Glyph n="dots" color="#787c84" /></Tabs>
            <SignalTabs><SignalTab $on $w={106} $gap={12}><Glyph n="signals" color={c.blue} />Señales</SignalTab><SignalTab $gap={13}><Glyph n="groups" />Grupos</SignalTab></SignalTabs>
            <Tools $h={27}><Field $w={208} $h={27}>Filtrar Señales<Glyph n="search" /></Field></Tools>
            <Tree $m="3px 4px 3px">
              <Row $head $gap={0}><Glyph n="fold" s={12} color="#878b92" /><Glyph n="node" /><Tool $w={6} />Node</Row>
              <SignalList items={signals} />
              <Row $head $gap={0}><Glyph n="fold" s={12} color="#878b92" /><Glyph n="cube" /><Tool $w={6} />Object</Row>
              <SignalList items={['property_list_changed()', 'script_changed()']} />
            </Tree>
            <Connect>Conectar...</Connect>
          </Dock>
        </Column>
      </Work>

      <Taskbar>
        <Start><svg width="16" height="16" viewBox="0 0 16 16"><path d="M0 2l6.500-1v6.500H0zM7.500.9L16 0v7.500H7.500zM0 8.500h6.500V15L0 14zM7.500 8.500H16V16l-8.500-1z" fill="#fff" /></svg></Start>
        <Grip />
        <TaskRows>
          <TaskRow $h={31}>
            {['win7', 'monitor', 'loop'].map(n => <Slot key={n}><AppIcon n={n} /></Slot>)}
            <First />
            <Task $ls={-.12}><AppIcon n="folder" />H:\[PRJS]\GODOT</Task>
            <Task><AppIcon n="brave" /><AppIcon n="speaker" s={11} />Introducción GOD...</Task>
            <Task><AppIcon n="gem" />MyTienda V 1.41.20</Task>
            <Task $ls={-.4}><AppIcon n="pane" />Facturador</Task>
            <Task><AppIcon n="blender" />Blender* [E:\[GRAFIC...</Task>
          </TaskRow>
          <TaskRow $h={30}>
            {['hex', 'balls', 'firefox', 'cc', 'painter', 'smile', 'opera', 'swirl', 'remote', 'obs', 'red', 'h', 'vnc', 'recycle', 'contact', 'code'].map(n => <Slot key={n}><AppIcon n={n} /></Slot>)}
            <ActiveTask><Godot />(*) MataMata - Godot...</ActiveTask>
          </TaskRow>
        </TaskRows>
        <Grip />
        <Lang>ES</Lang>
        <Tray>
          <Temp $c="#2d7fd2">31</Temp><Temp $c="#2d7fd2">36</Temp><AppIcon n="key" /><AppIcon n="usb" /><AppIcon n="sync" /><AppIcon n="redTray" /><AppIcon n="nvidia" /><AppIcon n="cam" s={14} />
          <AppIcon n="square" /><AppIcon n="orbit" /><AppIcon n="lockWin" /><Temp $c="#2b7c2a">33</Temp><Temp $c="#d9772b">30</Temp><AppIcon n="net" /><AppIcon n="sound" />
        </Tray>
        <Clock>19:50<br />martes<br />26/09/2023</Clock>
        <ShowDesk />
      </Taskbar>

      <Sliver />
      <Menu>
        {entries.map((e, i) => (e ? <Entry key={i} $hot={e[3]}><Glyph n={e[0]} color={e[0] === 'doc' ? '#9fa3a9' : c.icon} />{e[1]}<Keys>{e[2]}</Keys></Entry> : <Rule key={i} />))}
      </Menu>
      <Highlight $x={24} $y={136} $w={120} $h={33} />
      <Highlight $x={144} $y={314} $w={344} $h={41} />
    </Shell>
  );
}
